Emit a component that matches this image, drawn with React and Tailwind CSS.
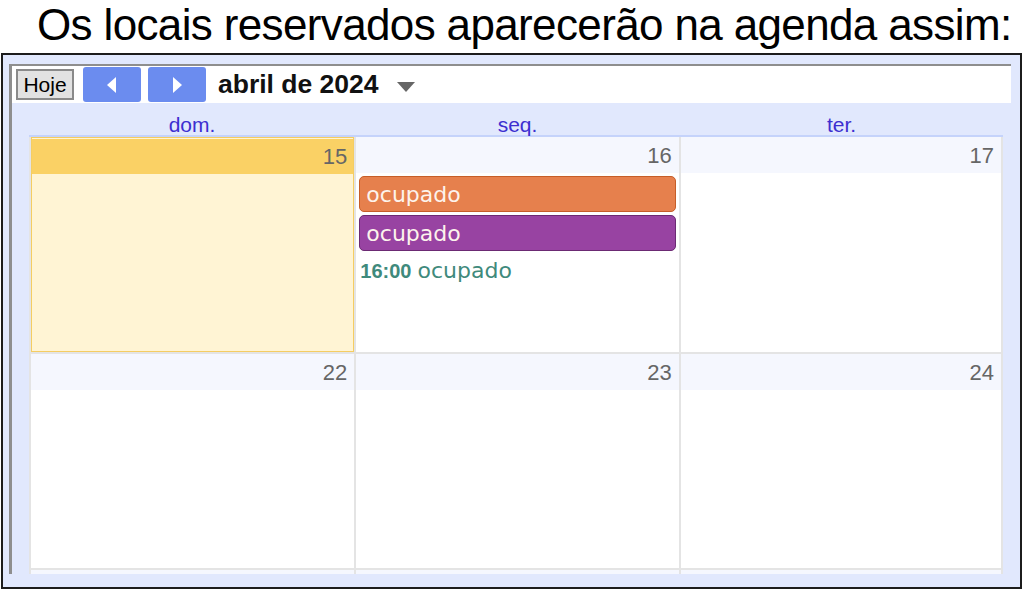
import React from 'react';

const days = ['dom.', 'seq.', 'ter.'];
const colW = ['w-[326px]', 'w-[325px]', 'w-[323px]'];

function DayCell({ num, today, children, width }) {
  if (today) {
    return (
      <div className={`${width} h-full border-l-2 border-[#e4e4e4]`}>
        <div className="h-full border border-[#f5cd62] bg-[#fff4d4] flex flex-col">
          <div className="h-[35px] mt-[1px] bg-[#fad165] flex items-center justify-end pr-[6px] text-[22px] text-[#666]">{num}</div>
        </div>
      </div>
    );
  }
  return (
    <div className={`${width} h-full border-l-2 border-[#e4e4e4] bg-white flex flex-col`}>
      <div className="h-[36px] shrink-0 bg-[#f5f7fe] flex items-center justify-end pr-[7px] text-[22px] text-[#666]">{num}</div>
      {children}
    </div>
  );
}

function Event({ bg, border, children }) {
  return (
    <div className={`mx-[3px] h-[36px] rounded-[5px] border ${bg} ${border} flex items-center pl-[6px] text-[22px] text-[#fdf3ec] font-['DejaVu_Sans',sans-serif]`}>
      {children}
    </div>
  );
}

export default function App() {
  return (
    <div className="w-[1024px] h-[590px] bg-white overflow-hidden font-['Liberation_Sans',Arial,sans-serif]">
      {/* título */}
      <div className="h-[53px] pl-[37px] text-[44px] leading-[49px] tracking-[-0.64px] text-black whitespace-nowrap">
        Os locais reservados aparecerão na agenda assim:
      </div>

      {/* moldura da agenda */}
      <div className="ml-[1px] w-[1021px] h-[536px] border-2 border-[#1c1c1c] bg-[#e1e8fd] pl-[6px] pt-[9px] pr-[9px] pb-[13px]">
        <div className="h-full border-t-2 border-l-[3px] border-[#8e8e8e] flex flex-col">
          {/* barra de navegação */}
          <div className="h-[37px] shrink-0 bg-white flex items-center pl-[4px]">
            <button className="w-[58px] h-[31px] border-2 border-[#8a8a8a] bg-[#e2e2e2] text-[21px] text-black leading-none">
              Hoje
            </button>
            <button className="ml-[9px] w-[58px] h-[35px] rounded-[3px] bg-[#6b8cef] flex items-center justify-center">
              <svg width="10" height="16" viewBox="0 0 10 16"><path d="M9 0 L0 8 L9 16 Z" fill="#fff" /></svg>
            </button>
            <button className="ml-[7px] w-[58px] h-[35px] rounded-[3px] bg-[#6b8cef] flex items-center justify-center">
              <svg width="10" height="16" viewBox="0 0 10 16"><path d="M1 0 L10 8 L1 16 Z" fill="#fff" /></svg>
            </button>
            <span className="ml-[12px] text-[26.5px] font-bold text-[#111]">abril de 2024</span>
            <svg className="ml-[18px] mt-[5px]" width="18" height="10" viewBox="0 0 18 10"><path d="M0 0 L18 0 L9 10 Z" fill="#666" /></svg>
          </div>

          {/* cabeçalho dos dias */}
          <div className="ml-[17px] w-[974px] h-[34px] shrink-0 flex items-end border-b-2 border-[#c5d3fb]">
            {days.map((d, i) => (
              <div key={d} className={`${colW[i]} text-center text-[21px] leading-[21px] text-[#3d2fd0]`}>{d}</div>
            ))}
          </div>

          {/* grade */}
          <div className="ml-[17px] w-[974px] flex-1 min-h-0 flex flex-col overflow-hidden border-r-2 border-[#e4e4e4]">
            <div className="h-[215px] shrink-0 flex">
              <DayCell num="15" today width={colW[0]} />
              <DayCell num="16" width={colW[1]}>
                <div className="mt-[3px] flex flex-col gap-[3px]">
                  <Event bg="bg-[#e6804d]" border="border-[#c65d28]">ocupado</Event>
                  <Event bg="bg-[#9843a2]" border="border-[#6b2a73]">ocupado</Event>
                  <div className="mt-[4px] pl-[4px] leading-[26px] text-[#3f8a7c] flex items-baseline">
                    <span className="font-bold text-[20px]">16:00</span>
                    <span className="ml-[6px] text-[22px] font-['DejaVu_Sans',sans-serif]">ocupado</span>
                  </div>
                </div>
              </DayCell>
              <DayCell num="17" width={colW[2]} />
            </div>
            <div className="h-[216px] shrink-0 flex border-t-2 border-[#e4e4e4]">
              <DayCell num="22" width={colW[0]} />
              <DayCell num="23" width={colW[1]} />
              <DayCell num="24" width={colW[2]} />
            </div>
            <div className="h-[20px] shrink-0 flex border-t-2 border-[#e4e4e4]">
              <DayCell num="" width={colW[0]} />
              <DayCell num="" width={colW[1]} />
              <DayCell num="" width={colW[2]} />
            </div>
          </div>
        </div>
      </div>
    </div>
  );
}
